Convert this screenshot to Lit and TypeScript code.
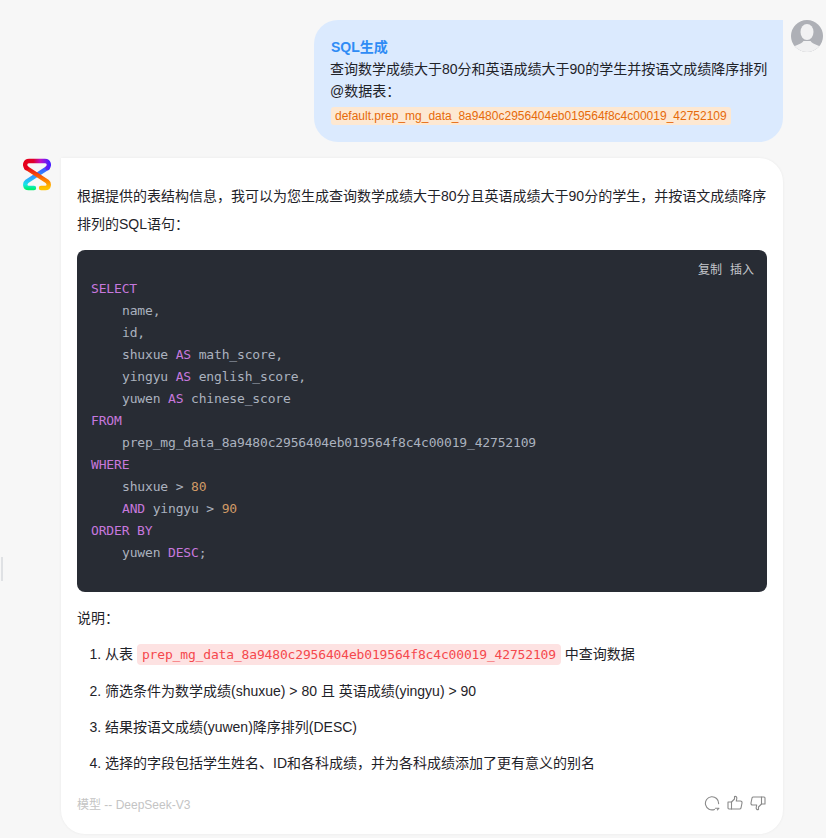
import { LitElement, html, css } from "lit";
import { customElement } from "lit/decorators.js";

const kw = (s: string) => html`<span class="kw">${s}</span>`;
const num = (s: string) => html`<span class="num">${s}</span>`;

@customElement("app-root")
export class AppRoot extends LitElement {
  static styles = css`
    :host {
      display: block;
      width: 826px;
      height: 838px;
      overflow: hidden;
      background: #f7f7f7;
      position: relative;
      font-family: "Liberation Sans", "Noto Sans CJK SC", sans-serif;
      font-size: 14px;
      color: #1f2329;
    }
    .page {
      display: flex;
      flex-direction: column;
      gap: 16px;
      padding-top: 20px;
    }
    .row {
      display: flex;
      align-items: flex-start;
    }
    .row.user {
      justify-content: flex-end;
      padding-right: 3px;
      gap: 8px;
    }
    .row.bot {
      padding-left: 23px;
      gap: 10px;
    }
    .avatar {
      width: 32px;
      height: 32px;
      flex: none;
      display: block;
    }
    .logo {
      width: 28px;
      height: 33px;
      flex: none;
      display: block;
    }
    .bubble {
      width: 469px;
      box-sizing: border-box;
      height: 122px;
      padding: 16px;
      background: #dbeafe;
      border-radius: 24px 0 24px 24px;
      line-height: 22px;
      white-space: nowrap;
    }
    .tag {
      color: #2f8cf5;
      font-weight: 700;
      font-size: 14px;
      padding-left: 1px;
      height: 22px;
    }
    .ds {
      display: block;
      width: max-content;
      margin: 5px 0 0 1px;
      padding: 0 4px;
      height: 18px;
      line-height: 18px;
      font-size: 12px;
      color: #e66a0a;
      background: #fde8d2;
      border-radius: 3px;
    }
    .card {
      width: 722px;
      height: 676px;
      box-sizing: border-box;
      padding: 24px 16px 0;
      background: #fff;
      border-radius: 0 24px 24px 24px;
      box-shadow: 0 0 3px rgba(0, 0, 0, 0.06);
      display: flex;
      flex-direction: column;
    }
    p {
      margin: 0;
    }
    .intro {
      line-height: 28px;
    }
    .code {
      position: relative;
      margin-top: 12px;
      height: 342px;
      box-sizing: border-box;
      padding: 28px 14px 0;
      background: #282c34;
      border-radius: 8px;
      color: #abb2bf;
      font-family: "DejaVu Sans Mono", monospace;
      font-size: 13px;
      letter-spacing: -0.16px;
      line-height: 22px;
      white-space: nowrap;
    }
    .in {
      padding-left: 31px;
    }
    .kw {
      color: #c678dd;
    }
    .num {
      color: #d19a66;
    }
    .tools {
      position: absolute;
      top: 12px;
      right: 13px;
      display: flex;
      gap: 8px;
      font-family: "Liberation Sans", "Noto Sans CJK SC", sans-serif;
      font-size: 12px;
      letter-spacing: 0;
      line-height: 16px;
      color: #c4c6cb;
    }
    .note {
      margin-top: 16px;
      line-height: 20px;
    }
    ol {
      margin: 0;
      padding: 0 0 0 28px;
      line-height: 36px;
    }
    li {
      height: 36px;
      line-height: 36px;
    }
    li:first-child {
      margin-top: 8px;
      height: 37px;
    }
    code {
      font-family: "DejaVu Sans Mono", monospace;
      font-size: 13px;
      letter-spacing: -0.16px;
      color: #f5484d;
      background: #fde2e2;
      border-radius: 4px;
      padding: 3px 5px;
    }
    .foot {
      margin-top: 12px;
      display: flex;
      align-items: center;
      justify-content: space-between;
      font-size: 12px;
      color: #c4c4c4;
      height: 20px;
    }
    .acts {
      display: flex;
      gap: 7px;
      padding-right: 1px;
    }
    .acts svg {
      width: 16px;
      height: 16px;
      display: block;
      fill: none;
      stroke: #8a8a8a;
      stroke-width: 1.1;
      stroke-linejoin: round;
      stroke-linecap: round;
    }
    .edge {
      position: absolute;
      left: 1px;
      top: 557px;
      width: 2px;
      height: 24px;
      background: #dfe1e4;
    }
  `;

  render() {
    return html`
      <div class="page">
        <div class="row user">
          <div class="bubble">
            <div class="tag">SQL生成</div>
            <div>查询数学成绩大于80分和英语成绩大于90的学生并按语文成绩降序排列</div>
            <div>@数据表：</div>
            <span class="ds">default.prep_mg_data_8a9480c2956404eb019564f8c4c00019_42752109</span>
          </div>
          <svg class="avatar" viewBox="0 0 32 32">
            <defs><clipPath id="av"><circle cx="16" cy="16" r="16"></circle></clipPath></defs>
            <g clip-path="url(#av)">
              <rect width="32" height="32" fill="#aeb0b6"></rect>
              <ellipse cx="16" cy="12" rx="6.5" ry="8" fill="#f1f1f2"></ellipse>
              <path d="M0 32V28C4 25 10 24.5 12.5 21H19.5C22 24.5 28 25 32 28V32Z" fill="#f1f1f2"></path>
            </g>
          </svg>
        </div>
        <div class="row bot">
          <svg class="logo" viewBox="0 0 28 33" fill="none" stroke-width="4.4" stroke-linecap="round">
            <defs>
              <linearGradient id="top" gradientUnits="userSpaceOnUse" x1="2" y1="0" x2="26" y2="0">
                <stop offset="0" stop-color="#e6001a"></stop>
                <stop offset="0.35" stop-color="#e0002a"></stop>
                <stop offset="0.65" stop-color="#c010c8"></stop>
                <stop offset="1" stop-color="#4a20ff"></stop>
              </linearGradient>
              <linearGradient id="warm" gradientUnits="userSpaceOnUse" x1="0" y1="9" x2="0" y2="30">
                <stop offset="0" stop-color="#e6001a"></stop>
                <stop offset="0.6" stop-color="#ff7a00"></stop>
                <stop offset="1" stop-color="#ffc400"></stop>
              </linearGradient>
              <linearGradient id="cool" gradientUnits="userSpaceOnUse" x1="0" y1="9" x2="0" y2="31">
                <stop offset="0" stop-color="#3a4cff"></stop>
                <stop offset="0.5" stop-color="#2ea8ff"></stop>
                <stop offset="0.8" stop-color="#16e6e6"></stop>
                <stop offset="1" stop-color="#00f070"></stop>
              </linearGradient>
            </defs>
            <path d="M24.5 10L3.8 23.5C1.4 25.5 1.8 30 5.5 30H11" stroke="url(#cool)"></path>
            <path d="M3.5 10L24.2 23.5C26.6 25.5 26.2 30 22.5 30H18" stroke="url(#warm)"></path>
            <path d="M3.5 10C1 7 2.2 3 6 3H22C25.8 3 27 7 24.5 10" stroke="url(#top)"></path>
          </svg>
          <div class="card">
            <p class="intro">根据提供的表结构信息，我可以为您生成查询数学成绩大于80分且英语成绩大于90分的学生，并按语文成绩降序排列的SQL语句：</p>
            <div class="code">
              <div class="tools"><span>复制</span><span>插入</span></div>
              <div>${kw("SELECT")}</div>
              <div class="in">name,</div>
              <div class="in">id,</div>
              <div class="in">shuxue ${kw("AS")} math_score,</div>
              <div class="in">yingyu ${kw("AS")} english_score,</div>
              <div class="in">yuwen ${kw("AS")} chinese_score</div>
              <div>${kw("FROM")}</div>
              <div class="in">prep_mg_data_8a9480c2956404eb019564f8c4c00019_42752109</div>
              <div>${kw("WHERE")}</div>
              <div class="in">shuxue &gt; ${num("80")}</div>
              <div class="in">${kw("AND")} yingyu &gt; ${num("90")}</div>
              <div>${kw("ORDER BY")}</div>
              <div class="in">yuwen ${kw("DESC")};</div>
            </div>
            <p class="note">说明：</p>
            <ol>
              <li>从表 <code>prep_mg_data_8a9480c2956404eb019564f8c4c00019_42752109</code> 中查询数据</li>
              <li>筛选条件为数学成绩(shuxue) &gt; 80 且 英语成绩(yingyu) &gt; 90</li>
              <li>结果按语文成绩(yuwen)降序排列(DESC)</li>
              <li>选择的字段包括学生姓名、ID和各科成绩，并为各科成绩添加了更有意义的别名</li>
            </ol>
            <div class="foot">
              <span>模型 -- DeepSeek-V3</span>
              <div class="acts">
                <svg viewBox="0 0 16 16"><path d="M10.5 14.4A6.6 6.6 0 1 1 14.6 8.6"></path><path d="M11.4 13.2H15L13.4 14.8"></path></svg>
                <svg viewBox="0 0 16 16"><path d="M1 7H4.5V14H2A1 1 0 0 1 1 13Z"></path><path d="M4.5 7L7.5 4V1.5C9 1 10 2 9.8 3.5L9.3 6H13.5C14.6 6 15.2 7 15 8L14 13C13.8 13.6 13.4 14 12.6 14H4.5"></path></svg>
                <svg viewBox="0 0 16 16"><path d="M15 9H11.5V2H14A1 1 0 0 1 15 3Z"></path><path d="M11.5 9L8.5 12V14.5C7 15 6 14 6.2 12.5L6.7 10H2.5C1.4 10 .8 9 1 8L2 3C2.2 2.4 2.6 2 3.4 2H11.5"></path></svg>
              </div>
            </div>
          </div>
        </div>
      </div>
      <div class="edge"></div>
    `;
  }
}
